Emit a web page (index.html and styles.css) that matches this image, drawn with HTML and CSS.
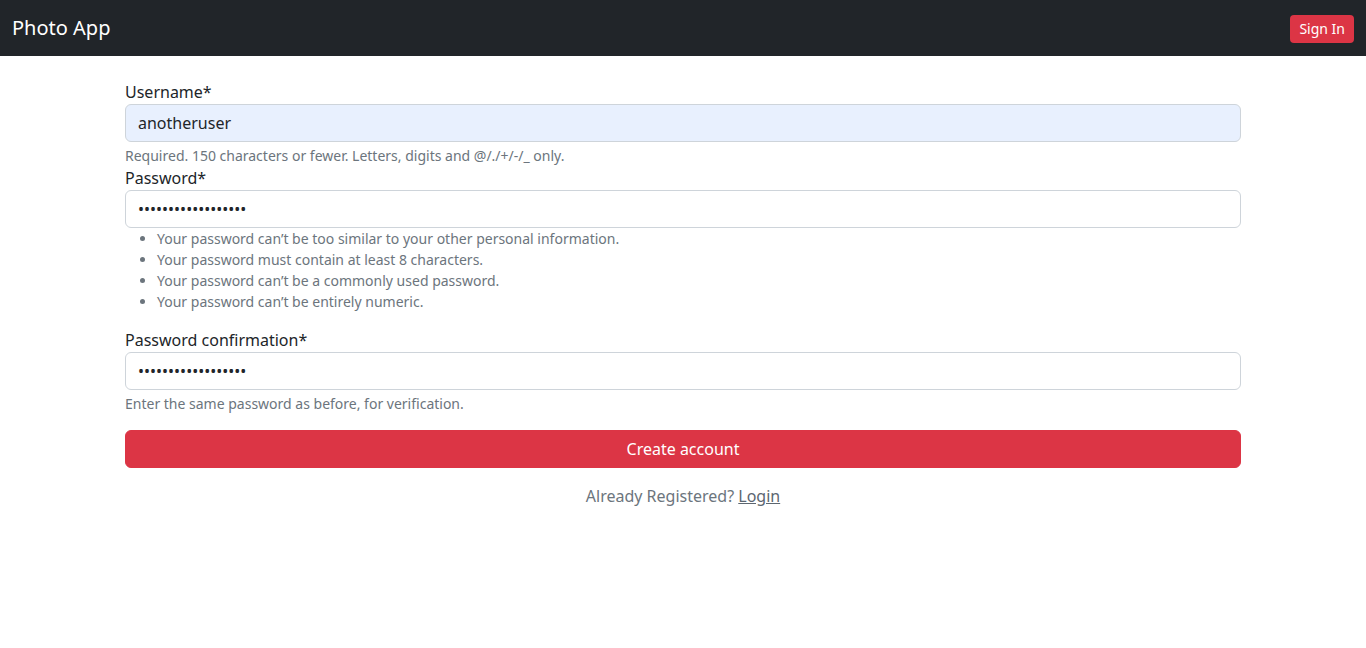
FILE: index.html
```html
<!DOCTYPE html>
<html lang="en">
<head>
<meta charset="utf-8">
<title>Photo App</title>
<link rel="stylesheet" href="styles.css">
</head>
<body>
<nav class="navbar">
  <a class="brand" href="#">Photo App</a>
  <a class="btn-signin" href="#">Sign In</a>
</nav>
<main class="container">
  <form class="signup">
    <label class="label" for="username">Username*</label>
    <input class="field autofill" id="username" type="text" value="anotheruser">
    <div class="help">Required. 150 characters or fewer. Letters, digits and @/./+/-/_ only.</div>

    <label class="label" for="password1">Password*</label>
    <input class="field" id="password1" type="password" value="abcdefghijklmnopqr">
    <ul class="help-list">
      <li>Your password can’t be too similar to your other personal information.</li>
      <li>Your password must contain at least 8 characters.</li>
      <li>Your password can’t be a commonly used password.</li>
      <li>Your password can’t be entirely numeric.</li>
    </ul>

    <label class="label" for="password2">Password confirmation*</label>
    <input class="field" id="password2" type="password" value="abcdefghijklmnopqr">
    <div class="help">Enter the same password as before, for verification.</div>

    <button class="btn-submit" type="button">Create account</button>
    <p class="already">Already Registered? <a href="#" class="login">Login</a></p>
  </form>
</main>
</body>
</html>
```
FILE: styles.css
```css
* { box-sizing: border-box; }
html, body { margin: 0; padding: 0; }
body {
  font-family: "Noto Sans", "Open Sans", "DejaVu Sans", sans-serif;
  font-size: 16px;
  line-height: 1.5;
  color: #212529;
  background: #fff;
}
.navbar {
  height: 56px;
  background: #212529;
  display: flex;
  align-items: center;
  justify-content: space-between;
  padding: 0 12px;
}
.brand {
  color: #fff;
  font-size: 20px;
  line-height: 30px;
  text-decoration: none;
}
.btn-signin {
  background: #dc3545;
  color: #fff;
  font-size: 14px;
  line-height: 20px;
  padding: 4px 9px;
  border-radius: 4px;
  text-decoration: none;
  margin-top: 1px;
}
.container {
  width: 1140px;
  margin: 0 auto;
  padding: 0 12px;
}
.signup {
  display: flex;
  flex-direction: column;
  padding-top: 24px;
}
.label {
  display: block;
  font-size: 16px;
  line-height: 24px;
  margin: 0;
}
.field {
  display: block;
  width: 100%;
  height: 38px;
  padding: 6px 12px;
  font-family: inherit;
  font-size: 16px;
  line-height: 24px;
  color: #212529;
  background: #fff;
  border: 1px solid #ced4da;
  border-radius: 6px;
  outline: none;
}
.field.autofill { background: #e8f0fe; }
.help {
  margin-top: 3px;
  font-size: 14px;
  line-height: 21px;
  color: #6c757d;
}
.help-list {
  margin: 0 0 16px;
  padding-left: 32px;
  font-size: 14px;
  line-height: 21px;
  color: #6c757d;
}
.btn-submit {
  margin-top: 16px;
  width: 100%;
  height: 38px;
  background: #dc3545;
  color: #fff;
  border: 1px solid #dc3545;
  border-radius: 6px;
  font-family: inherit;
  font-size: 16px;
  line-height: 24px;
}
.already {
  margin: 16px 0 0;
  text-align: center;
  color: #6c757d;
}
.login { color: #5c6670; text-decoration: underline; }
```
